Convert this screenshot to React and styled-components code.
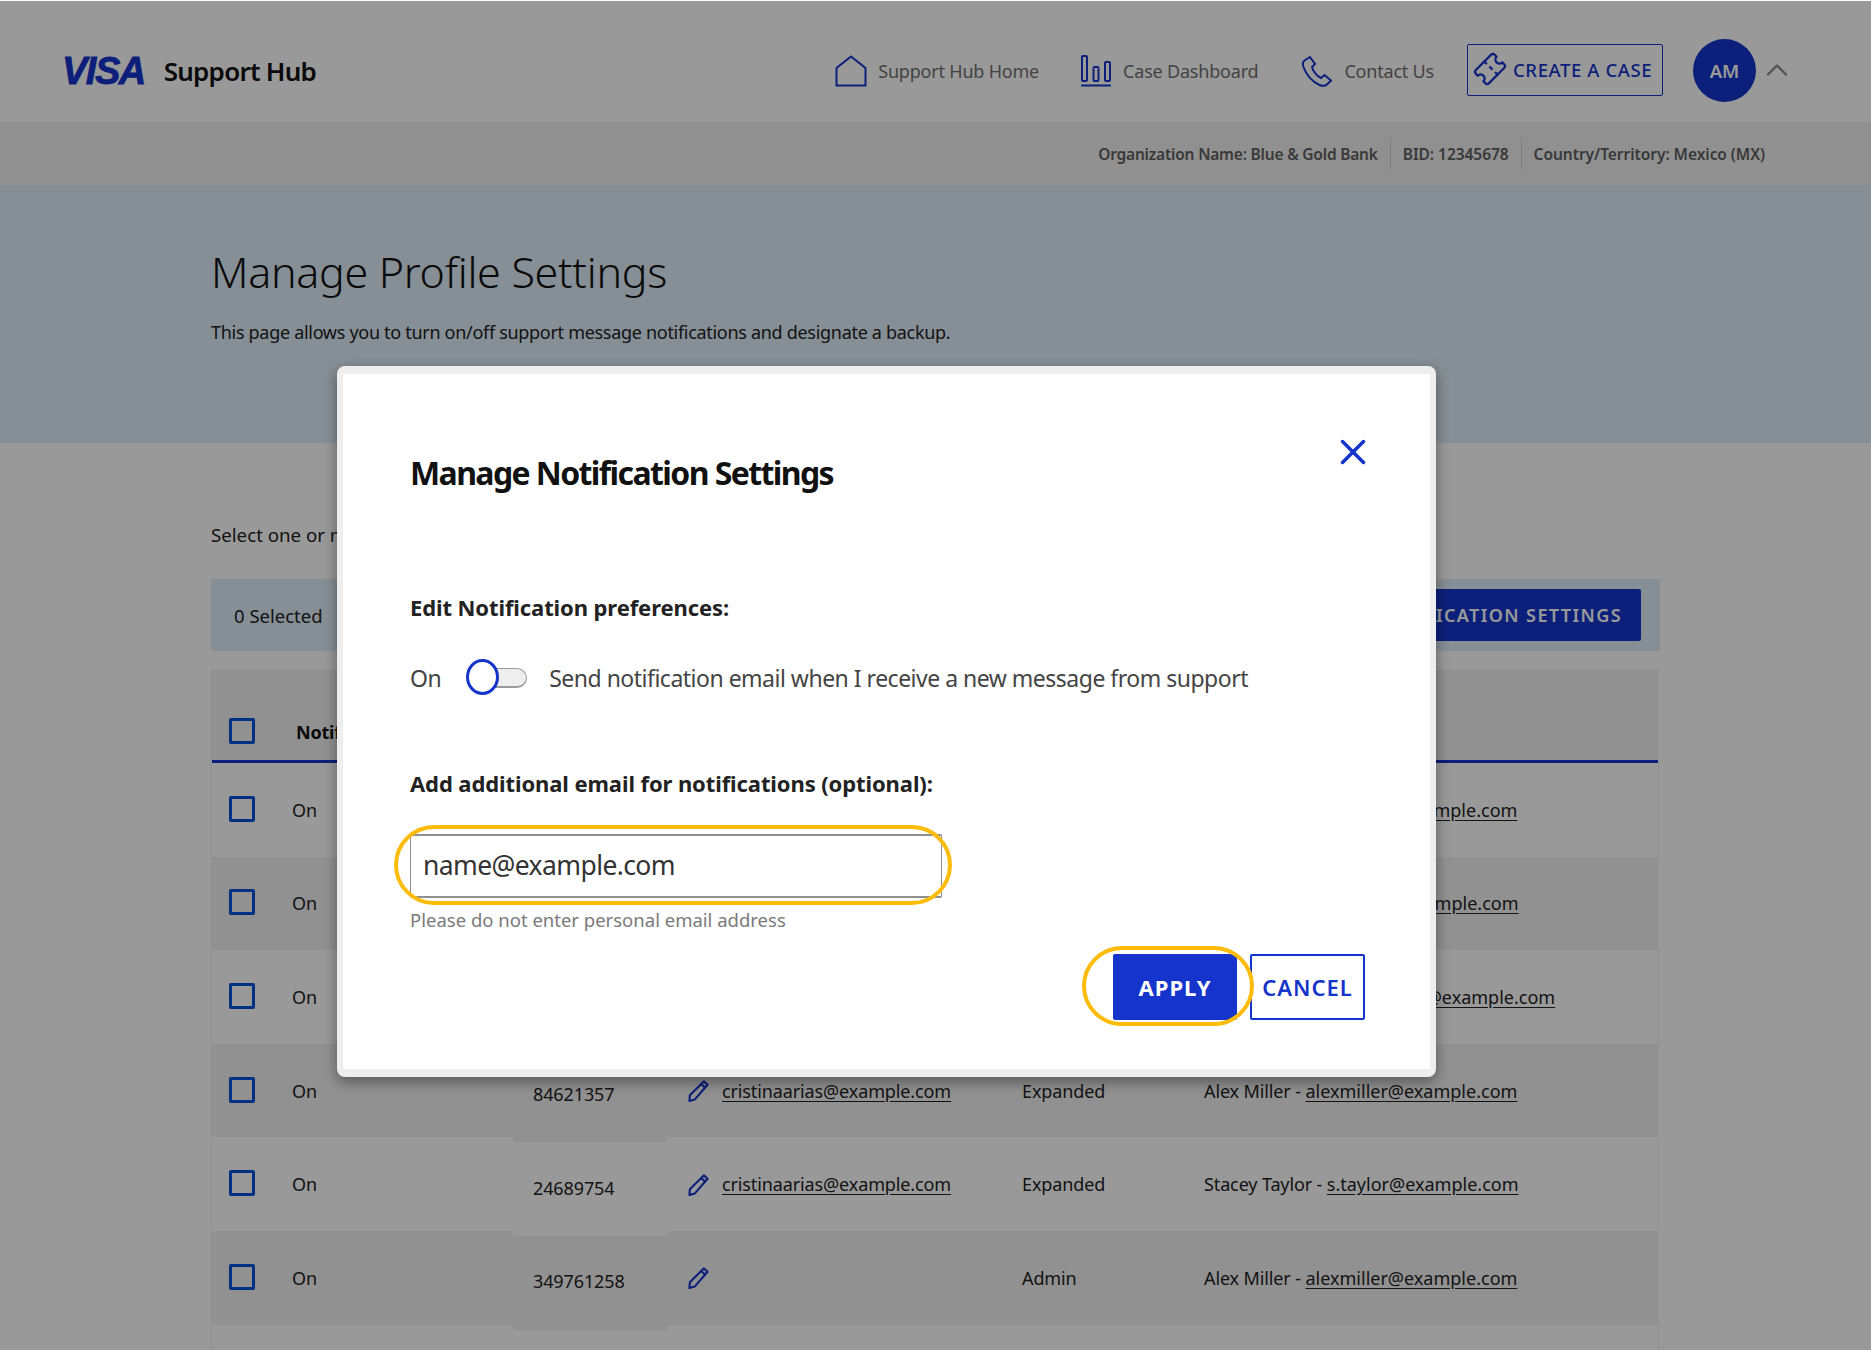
import React from 'react';
import styled, {createGlobalStyle} from 'styled-components';
import {Ticket, ChevronUp, X} from 'lucide-react';

const GlobalStyle = createGlobalStyle`
    html, body {
        margin:0;
        padding:0;
        background:#fff;
    }
    * {
        box-sizing:border-box;
    }
`;

const BLUE = '#1434cb';

const Page = styled.div`
    position:relative;
    width:1871px;
    height:1351px;
    overflow:hidden;
    font-family:"Noto Sans", "Open Sans", sans-serif;
    color:#1a1a1a;
    background:#fff;
`;

const TopBar = styled.header`
    height:122px;
    padding:18px 76px 0 62px;
    display:flex;
    align-items:center;
    justify-content:space-between;
    background:#fff;
`;

const Brand = styled.div`
    display:flex;
    align-items:center;
    gap:19px;
    padding-top:2px;
`;

const VisaMark = styled.span`
    font-family:"Liberation Sans", Arial, sans-serif;
    font-size:38px;
    font-weight:700;
    font-style:italic;
    letter-spacing:-1.5px;
    color:${BLUE};
    -webkit-text-stroke:0.8px ${BLUE};
    line-height:1;
`;

const BrandName = styled.span`
    font-size:26px;
    font-weight:600;
    letter-spacing:-0.75px;
    color:#111;
`;

const Nav = styled.nav`
    display:flex;
    align-items:center;
`;

const NavLink = styled.a`
    display:flex;
    align-items:center;
    gap:11px;
    margin-right:${p => p.$gap}px;
    padding-top:1px;
    font-size:18px;
    letter-spacing:-0.2px;
    color:#717171;
`;

const NavIcon = styled.svg`
    width:32px;
    height:32px;
    fill:none;
    stroke:${BLUE};
    stroke-width:2;
    flex:none;
`;

const CreateButton = styled.button`
    width:196px;
    height:52px;
    display:flex;
    align-items:center;
    gap:7px;
    padding:0 0 2px 6px;
    margin-right:30px;
    background:transparent;
    border:1.5px solid ${BLUE};
    border-radius:2px;
    font-family:inherit;
    font-size:18.5px;
    font-weight:500;
    letter-spacing:0.6px;
    color:${BLUE};
    white-space:nowrap;
`;

const TicketIcon = styled(Ticket)`
    width:32px;
    height:32px;
    flex:none;
    transform:rotate(-45deg);
    stroke-width:1.7;
`;

const Avatar = styled.div`
    width:63px;
    height:63px;
    border-radius:50%;
    display:flex;
    align-items:center;
    justify-content:center;
    background:${BLUE};
    color:#fff;
    font-size:18.5px;
    font-weight:600;
`;

const Chevron = styled(ChevronUp)`
    width:36px;
    height:36px;
    margin-left:3px;
    color:#8c8c8c;
    stroke-width:1.6;
`;

const OrgBar = styled.div`
    height:63px;
    padding-right:106px;
    display:flex;
    align-items:center;
    justify-content:flex-end;
    background:#f0f0f0;
    font-size:15.5px;
    font-weight:600;
    letter-spacing:-0.05px;
    color:#5f5f5f;
`;

const OrgItem = styled.span`
    padding:0 12px;
    line-height:34px;
    border-left:${p => (p.$first ? 'none' : '1px solid #d8d8d8')};
    letter-spacing:${p => (p.$first ? '-0.2px' : 'inherit')};

    &:last-child {
        padding-right:0;
    }
`;

const Hero = styled.section`
    height:258px;
    padding:60px 0 0 211px;
    background:#e0eef9;
`;

const Title = styled.h1`
    margin:0;
    font-size:43px;
    font-weight:300;
    line-height:54px;
    letter-spacing:-0.3px;
    color:#111;
`;

const Intro = styled.p`
    margin:20px 0 0;
    font-size:18px;
    line-height:26px;
    letter-spacing:-0.3px;
    color:#222;
`;

const Content = styled.main`
    padding:78px 211px 0;
`;

const Hint = styled.p`
    margin:0;
    font-size:18.7px;
    line-height:28px;
    color:#222;
`;

const ActionBar = styled.div`
    height:72px;
    width:1449px;
    margin-top:30px;
    padding:0 19px 0 23px;
    display:flex;
    align-items:center;
    justify-content:space-between;
    background:#e0eef9;
    font-size:18.5px;
    color:#222;
`;

const ManageButton = styled.button`
    height:52px;
    padding:0 19px;
    background:${BLUE};
    border:none;
    border-radius:2px;
    font-family:inherit;
    font-size:18px;
    font-weight:600;
    letter-spacing:1.4px;
    color:#fff;
`;

const Table = styled.div`
    width:1448px;
    margin-top:19px;
    border-left:1px solid #f2f2f2;
    border-right:1px solid #f2f2f2;
`;

const COLUMNS = '80px 221px 154px 355px 182px 1fr';

const HeadRow = styled.div`
    height:93px;
    padding-top:48px;
    display:grid;
    grid-template-columns:${COLUMNS};
    background:#f2f2f2;
    border-bottom:3px solid ${BLUE};
    font-size:18px;
    font-weight:700;
    letter-spacing:-0.2px;
    color:#111;
`;

const HeadCell = styled.div`
    padding-top:2px;
    padding-left:${p => p.$pad || 0}px;
`;

const Row = styled.div`
    height:93.6px;
    display:grid;
    grid-template-columns:${COLUMNS};
    background:${p => (p.$dark ? '#f2f2f2' : '#fff')};
    font-size:18px;
    letter-spacing:-0.12px;
    color:#222;
`;

const Cell = styled.div`
    display:flex;
    align-items:center;
    gap:12px;
    padding-left:${p => p.$pad || 0}px;
    white-space:nowrap;
`;

const NumberCell = styled.div`
    margin:5px 0 -5px;
    padding:0 0 3px 20px;
    display:flex;
    align-items:center;
    background:${p => (p.$dark ? '#f2f2f2' : '#fff')};
`;

const CheckBox = styled.span`
    display:block;
    width:26px;
    height:26px;
    border:3px solid #0050d8;
    border-radius:2px;
`;

const CheckCell = styled.div`
    padding-left:17px;
    display:flex;
    align-items:${p => (p.$top ? 'flex-start' : 'center')};
    padding-bottom:${p => p.$low || 0}px;
`;

const Mail = styled.a`
    color:#222;
    text-decoration:underline;
    text-underline-offset:3px;
`;

const BackupMail = styled(Mail)`
    letter-spacing:0;
`;

const PencilIcon = styled.svg`
    width:23px;
    height:23px;
    flex:none;
    fill:none;
    stroke:${BLUE};
    stroke-width:2.2;
    stroke-linejoin:round;
`;

const Backdrop = styled.div`
    position:absolute;
    inset:1px 0;
    background:rgba(0,0,0,0.4);
`;

const Modal = styled.div`
    position:absolute;
    left:337px;
    top:366px;
    width:1099px;
    height:711px;
    padding:66px 65px 0 67px;
    background:#fff;
    border:solid #eeeeee;
    border-width:8px 6px;
    border-radius:8px;
    box-shadow:0 5px 14px rgba(0,0,0,0.4);
`;

const ModalHead = styled.div`
    display:flex;
    justify-content:space-between;
    align-items:flex-start;
`;

const ModalTitle = styled.h2`
    margin:11px 0 0;
    font-size:32px;
    font-weight:700;
    line-height:44px;
    letter-spacing:-1.6px;
    color:#111;
`;

const CloseButton = styled.button`
    padding:0;
    border:none;
    background:none;
    color:${BLUE};
    display:flex;
`;

const CloseIcon = styled(X)`
    width:42px;
    height:42px;
    margin:-9px -9px -9px 0;
    stroke-width:2;
`;

const SectionLabel = styled.div`
    margin-top:${p => p.$top}px;
    font-size:22px;
    font-weight:700;
    line-height:30px;
    letter-spacing:-0.1px;
    color:#222;
`;

const ToggleRow = styled.div`
    margin-top:38px;
    display:flex;
    align-items:center;
    height:36px;
    font-size:23px;
    letter-spacing:-0.5px;
    color:#444;
`;

const SwitchTrack = styled.span`
    position:relative;
    display:block;
    width:60px;
    height:20px;
    margin:0 22px 0 26px;
    background:#eeeeee;
    border:1px solid #9a9a9a;
    border-bottom-width:2px;
    border-radius:10px;
`;

const SwitchKnob = styled.span`
    position:absolute;
    left:-2px;
    top:-10px;
    width:33px;
    height:36px;
    border:3px solid ${BLUE};
    border-radius:50%;
    background:#fff;
`;

const InputWrap = styled.div`
    position:relative;
    width:532px;
    height:64px;
    margin-top:36px;
`;

const EmailInput = styled.div`
    height:100%;
    padding:0 0 2px 12px;
    display:flex;
    align-items:center;
    border:1px solid #8f8f8f;
    border-top-width:2px;
    border-bottom-width:2px;
    border-radius:2px;
    font-size:26.5px;
    letter-spacing:-0.6px;
    color:#333;
`;

const Ring = styled.span`
    position:absolute;
    inset:${p => p.$inset};
    border:4px solid #fdbb0a;
    border-radius:${p => p.$radius};
    pointer-events:none;
`;

const FieldNote = styled.div`
    margin-top:8px;
    font-size:18.5px;
    line-height:28px;
    color:#7a7a7a;
`;

const Actions = styled.div`
    margin-top:20px;
    display:flex;
    justify-content:flex-end;
    gap:13px;
`;

const ButtonWrap = styled.div`
    position:relative;
`;

const ModalButton = styled.button`
    width:${p => p.$w}px;
    height:66px;
    display:block;
    padding:0;
    border:2px solid ${BLUE};
    border-radius:2px;
    background:${p => (p.$primary ? BLUE : '#fff')};
    color:${p => (p.$primary ? '#fff' : BLUE)};
    font-family:inherit;
    font-size:22px;
    font-weight:${p => (p.$primary ? 700 : 600)};
    letter-spacing:1px;
`;

const Pencil = () => (
    <PencilIcon viewBox="0 0 24 24">
        <path d="M17.5 2.5l4 3.5L8 21.5 2.5 23l.5-6z" />
        <path d="M15 5.5l4 3.5" />
    </PencilIcon>
);

const rows = [
    {id:'61284573', role:'Expanded', name:'Alex Miller', backup:'alexmiller@example.com', mail:'cristinaarias@example.com'},
    {id:'57391246', role:'Expanded', name:'Stacey Taylor', backup:'s.taylor@example.com', mail:'cristinaarias@example.com'},
    {id:'93175284', role:'Expanded', name:'Jonathan Riviera', backup:'j.rivieras@example.com', mail:'cristinaarias@example.com'},
    {id:'84621357', role:'Expanded', name:'Alex Miller', backup:'alexmiller@example.com', mail:'cristinaarias@example.com'},
    {id:'24689754', role:'Expanded', name:'Stacey Taylor', backup:'s.taylor@example.com', mail:'cristinaarias@example.com'},
    {id:'349761258', role:'Admin', name:'Alex Miller', backup:'alexmiller@example.com'},
];

const App = () => {
    return (
        <>
            <GlobalStyle />
            <Page>
                <TopBar>
                    <Brand>
                        <VisaMark>VISA</VisaMark>
                        <BrandName>Support Hub</BrandName>
                    </Brand>
                    <Nav>
                        <NavLink $gap={41}>
                            <NavIcon viewBox="0 0 32 32">
                                <path d="M1.5 30.5V13L16 1.5 30.5 13v17.5z" />
                            </NavIcon>
                            Support Hub Home
                        </NavLink>
                        <NavLink $gap={43}>
                            <NavIcon viewBox="0 0 32 32">
                                <rect x="2" y="1" width="5" height="25" rx="1" />
                                <rect x="13.5" y="12" width="5" height="14" rx="1" />
                                <rect x="25" y="7" width="5" height="19" rx="1" />
                                <path d="M1 30.5h30" />
                            </NavIcon>
                            Case Dashboard
                        </NavLink>
                        <NavLink $gap={33}>
                            <NavIcon viewBox="0 0 32 32">
                                <path d="M9 2L3.5 5.5C1.5 7 1.5 9.5 2.5 12 5 19 11 26.5 18.5 30c3 1.2 5.5 1.2 7.5-.5l4-4-6.5-5.5-3.5 3c-4-1.5-8-7-9-11l3-3z" />
                            </NavIcon>
                            Contact Us
                        </NavLink>
                        <CreateButton>
                            <TicketIcon />
                            CREATE A CASE
                        </CreateButton>
                        <Avatar>AM</Avatar>
                        <Chevron />
                    </Nav>
                </TopBar>
                <OrgBar>
                    <OrgItem $first>Organization Name: Blue &amp; Gold Bank</OrgItem>
                    <OrgItem>BID: 12345678</OrgItem>
                    <OrgItem>Country/Territory: Mexico (MX)</OrgItem>
                </OrgBar>
                <Hero>
                    <Title>Manage Profile Settings</Title>
                    <Intro>This page allows you to turn on/off support message notifications and designate a backup.</Intro>
                </Hero>
                <Content>
                    <Hint>Select one or more users to manage their settings.</Hint>
                    <ActionBar>
                        <span>0 Selected</span>
                        <ManageButton>MANAGE NOTIFICATION SETTINGS</ManageButton>
                    </ActionBar>
                    <Table>
                        <HeadRow>
                            <CheckCell $top><CheckBox /></CheckCell>
                            <HeadCell $pad={4}>Notifications</HeadCell>
                            <HeadCell $pad={20}>BID</HeadCell>
                            <HeadCell $pad={20}>Email</HeadCell>
                            <HeadCell>Access</HeadCell>
                            <HeadCell>Backup</HeadCell>
                        </HeadRow>
                        {rows.map((row, i) => (
                            <Row key={row.id} $dark={i % 2 === 1}>
                                <CheckCell $low={2}><CheckBox /></CheckCell>
                                <Cell>On</Cell>
                                <NumberCell $dark={i % 2 === 1}>{row.id}</NumberCell>
                                <Cell $pad={20}>
                                    <Pencil />
                                    {row.mail && <Mail>{row.mail}</Mail>}
                                </Cell>
                                <Cell>{row.role}</Cell>
                                <Cell>
                                    <span>{row.name} - <BackupMail>{row.backup}</BackupMail></span>
                                </Cell>
                            </Row>
                        ))}
                        <Row />
                    </Table>
                </Content>
                <Backdrop />
                <Modal>
                    <ModalHead>
                        <ModalTitle>Manage Notification Settings</ModalTitle>
                        <CloseButton><CloseIcon /></CloseButton>
                    </ModalHead>
                    <SectionLabel $top={97}>Edit Notification preferences:</SectionLabel>
                    <ToggleRow>
                        On
                        <SwitchTrack><SwitchKnob /></SwitchTrack>
                        Send notification email when I receive a new message from support
                    </ToggleRow>
                    <SectionLabel $top={72}>Add additional email for notifications (optional):</SectionLabel>
                    <InputWrap>
                        <EmailInput>name@example.com</EmailInput>
                        <Ring $inset="-9px -10px -7px -16px" $radius="42px" />
                    </InputWrap>
                    <FieldNote>Please do not enter personal email address</FieldNote>
                    <Actions>
                        <ButtonWrap>
                            <ModalButton $primary $w={124}>APPLY</ModalButton>
                            <Ring $inset="-8px -17px -6px -31px" $radius="40px" />
                        </ButtonWrap>
                        <ModalButton $w={115}>CANCEL</ModalButton>
                    </Actions>
                </Modal>
            </Page>
        </>
    );
};

export default App;
